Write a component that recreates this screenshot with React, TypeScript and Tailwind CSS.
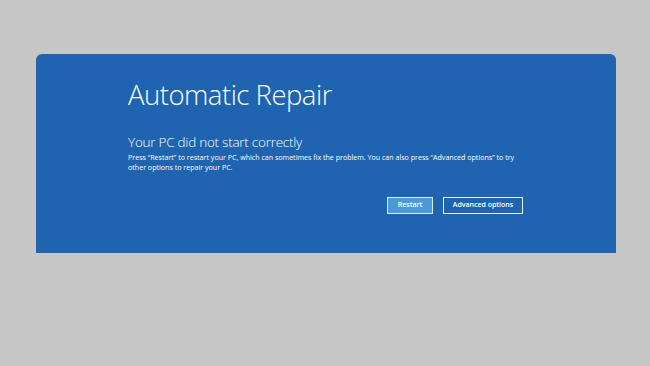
export default function App() {
  return (
    <div className="h-[366px] w-[650px] bg-[#c6c6c6] pt-[54px] pl-[36px] font-['Open_Sans',sans-serif]">
      <div className="h-[199px] w-[580px] rounded-t-[6px] bg-[#1f64b1] pl-[92px] pt-[21px] text-white">
        <h1 className="text-[27.5px] font-light leading-[40px] tracking-[-0.5px]">Automatic Repair</h1>
        <h2 className="mt-[19px] text-[13.5px] font-light leading-[17px] tracking-[-0.25px]">Your PC did not start correctly</h2>
        <p className="mt-[1px] w-[392px] text-[7.1px] leading-[10px]">
          Press “Restart” to restart your PC, which can sometimes fix the problem. You can also press “Advanced options” to try other options to repair your PC.
        </p>
        <div className="mt-[25px] flex w-[395px] justify-end gap-[10px]">
          <button className="h-[17px] w-[46px] border border-white/80 bg-[#4b9ad8] text-[7px] font-semibold">Restart</button>
          <button className="h-[17px] w-[80px] border border-white/90 bg-transparent text-[7px] font-semibold">Advanced options</button>
        </div>
      </div>
    </div>
  );
}
